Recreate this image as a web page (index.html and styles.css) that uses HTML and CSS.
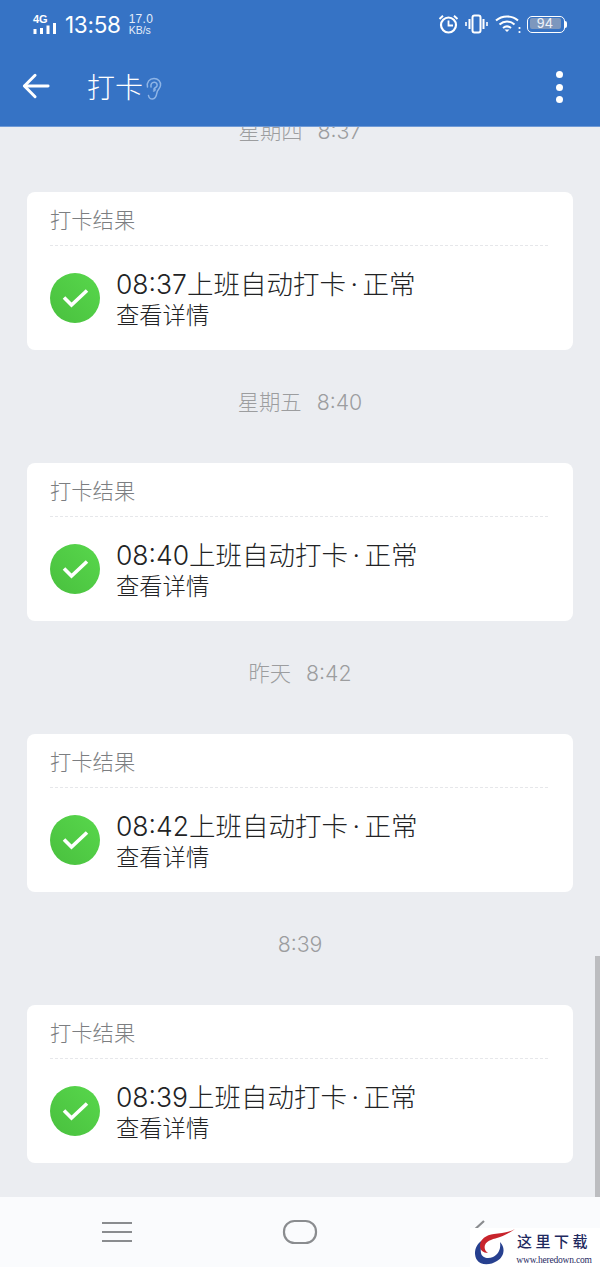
FILE: index.html
```html
<!DOCTYPE html>
<html lang="zh-CN">
<head>
<meta charset="utf-8">
<title>打卡</title>
<link rel="stylesheet" href="styles.css">
</head>
<body>
<div class="screen">
  <header class="appbar">
    <div class="status">
      <div class="status-left">
        <div class="net">
          <span class="net-label">4G</span>
          <svg class="net-bars" width="25" height="13" viewBox="0 0 25 13"><g fill="#fff"><rect x="0.5" y="7" width="3" height="5"/><rect x="7" y="6" width="3" height="6"/><rect x="13.5" y="3.500" width="3" height="8.500"/><rect x="20" y="1" width="3" height="11"/></g></svg>
        </div>
        <span class="clock">13:58</span>
        <div class="speed"><span class="speed-num">17.0</span><span class="speed-unit">KB/s</span></div>
      </div>
      <div class="status-right">
        <svg width="21" height="20" viewBox="0 0 21 20" fill="none" stroke="#fff"><circle cx="10.500" cy="11" r="7.500" stroke-width="2.200"/><path d="M10.500 6.500V11.500H15" stroke-width="1.800"/><path d="M1.500 5 5 1.800M19.500 5 16 1.800" stroke-width="2"/></svg>
        <svg width="23" height="20" viewBox="0 0 23 20" fill="none" stroke="#fff"><rect x="7.500" y="1.500" width="8" height="17" rx="2" stroke-width="2"/><path d="M4.500 5v10M18.500 5v10" stroke-width="2"/><path d="M1 8v4M22 8v4" stroke-width="1.600"/></svg>
        <svg width="26" height="20" viewBox="0 0 26 20" fill="none" stroke="#fff" stroke-width="2"><path d="M1 6.500C7 1 17 1 23 6.500"/><path d="M4.500 10.500C9 6.500 15 6.500 19.500 10.500"/><path d="M8 14C10.500 12 13.500 12 16 14"/><path d="M9.500 15.500 12 18l2.500-2.500Z" fill="#fff" stroke="none"/><circle cx="24.500" cy="14" r="1.100" fill="#fff" stroke="none"/><circle cx="24.500" cy="18" r="1.100" fill="#fff" stroke="none"/></svg>
        <div class="battery">
          <div class="battery-body"><span class="battery-fill">94</span></div>
          <span class="battery-cap"></span>
        </div>
      </div>
    </div>
    <div class="toolbar">
      <svg class="back" width="28" height="26" viewBox="0 0 30 28" fill="none" stroke="#fff" stroke-width="3.200" stroke-linecap="round" stroke-linejoin="round"><path d="M28 14H3"/><path d="M14 2.500 2.500 14 14 25.500"/></svg>
      <h1 class="title">打卡</h1>
      <svg class="ear" width="17" height="24" viewBox="0 0 17 24" fill="none" stroke="#8fb5e6" stroke-width="1.500" stroke-linecap="round"><path d="M2.500 10C1.500 5 4.500 1.500 9 1.500c4 0 7 3 6.500 7-.4 3-3 4.500-3.500 7-.5 3-1 6.500-4.500 6.500C5 22 3.800 20.500 3.500 18.500"/><path d="M6 10C5.500 7 7 5 9.500 5.200c2 .2 3 2 2.500 3.800-.4 1.500-2.500 1.500-3 3 1.500 0 1.500 2-.5 2"/></svg>
      <div class="more"><span></span><span></span><span></span></div>
    </div>
  </header>

  <main class="feed">
    <div class="feed-scroll">
      <section class="entry">
        <p class="stamp"><span>星期四</span><span>8:37</span></p>
        <article class="card">
          <h2 class="card-title">打卡结果</h2>
          <div class="card-row">
            <div class="ok"><svg width="50" height="50" viewBox="0 0 50 50"><path d="M14 24.500 21.500 32 37 17.500" fill="none" stroke="#fff" stroke-width="3.600"/></svg></div>
            <div class="card-text">
              <p class="punch">08:37上班自动打卡<span class="dot">·</span>正常</p>
              <p class="detail">查看详情</p>
            </div>
          </div>
        </article>
      </section>
      <section class="entry">
        <p class="stamp"><span>星期五</span><span>8:40</span></p>
        <article class="card">
          <h2 class="card-title">打卡结果</h2>
          <div class="card-row">
            <div class="ok"><svg width="50" height="50" viewBox="0 0 50 50"><path d="M14 24.500 21.500 32 37 17.500" fill="none" stroke="#fff" stroke-width="3.600"/></svg></div>
            <div class="card-text">
              <p class="punch">08:40上班自动打卡<span class="dot">·</span>正常</p>
              <p class="detail">查看详情</p>
            </div>
          </div>
        </article>
      </section>
      <section class="entry">
        <p class="stamp"><span>昨天</span><span>8:42</span></p>
        <article class="card">
          <h2 class="card-title">打卡结果</h2>
          <div class="card-row">
            <div class="ok"><svg width="50" height="50" viewBox="0 0 50 50"><path d="M14 24.500 21.500 32 37 17.500" fill="none" stroke="#fff" stroke-width="3.600"/></svg></div>
            <div class="card-text">
              <p class="punch">08:42上班自动打卡<span class="dot">·</span>正常</p>
              <p class="detail">查看详情</p>
            </div>
          </div>
        </article>
      </section>
      <section class="entry">
        <p class="stamp"><span>8:39</span></p>
        <article class="card">
          <h2 class="card-title">打卡结果</h2>
          <div class="card-row">
            <div class="ok"><svg width="50" height="50" viewBox="0 0 50 50"><path d="M14 24.500 21.500 32 37 17.500" fill="none" stroke="#fff" stroke-width="3.600"/></svg></div>
            <div class="card-text">
              <p class="punch">08:39上班自动打卡<span class="dot">·</span>正常</p>
              <p class="detail">查看详情</p>
            </div>
          </div>
        </article>
      </section>
    </div>
    <div class="scrollbar"></div>
  </main>

  <nav class="navbar">
    <svg width="32" height="22" viewBox="0 0 32 22" fill="none" stroke="#8a8c8f" stroke-width="2.200"><path d="M1 2H31M1 11H31M1 20H31"/></svg>
    <svg class="nav-home" width="36" height="26" viewBox="0 0 36 26" fill="none" stroke="#8a8c8f" stroke-width="2.200"><rect x="2" y="2" width="32" height="22" rx="10.500"/></svg>
    <svg class="nav-back" width="36" height="26" viewBox="0 0 36 26" fill="none" stroke="#8a8c8f" stroke-width="2.200"><path d="M24 2 12 13l12 11"/></svg>
  </nav>

  <aside class="mark">
    <svg width="42" height="38" viewBox="0 0 42 38"><path d="M9 12C1 16-1 26 3 32c4 6 14 5 20 1 7-4 9-13 3-19 1 6-1 12-7 15-5 2-11 1-12-4-1-5 1-9 2-13Z" fill="#27408f"/><path d="M41 1C34 5 27 5 20 6 12 7 6 11 6 18c0 4 3 7 8 7-3-2-4-5-3-8 2-5 9-6 15-8 6-2 11-5 15-8Z" fill="#c8242c"/></svg>
    <div class="mark-text">
      <span class="mark-name">这里下载</span>
      <span class="mark-url">www.heredown.com</span>
    </div>
  </aside>
</div>
</body>
</html>
```
FILE: styles.css
```css
* { box-sizing: border-box; }

html, body { margin: 0; padding: 0; }

body {
  font-family: "Inter", "Noto Sans CJK SC", sans-serif;
  background: #ebedf1;
}

h1, h2, p { margin: 0; font-weight: 400; }

.screen {
  position: relative;
  width: 600px;
  height: 1267px;
  display: flex;
  flex-direction: column;
  overflow: hidden;
}

/* Blue app bar with the phone status row inside */
.appbar {
  position: relative;
  z-index: 2;
  flex: 0 0 127px;
  background: #3673c5;
  border-bottom: 1px solid #6f9ad6;
  color: #fff;
  display: flex;
  flex-direction: column;
}

.status {
  height: 46px;
  padding: 13px 33px 0 33px;
  display: flex;
  justify-content: space-between;
  align-items: flex-start;
}

.status-left { display: flex; align-items: center; }

.net { position: relative; width: 25px; height: 20px; }

.net-label {
  position: absolute;
  top: -1px;
  left: 0;
  font: 700 11px/11px "Liberation Sans", sans-serif;
}

.net-bars { position: absolute; left: 0; bottom: 0; }

.clock {
  margin-left: 7px;
  font: 400 22.500px/24px "Inter", sans-serif;
  letter-spacing: -0.300px;
}

.speed {
  margin-left: 8px;
  display: flex;
  flex-direction: column;
  font-family: "Liberation Sans", sans-serif;
  color: #e4edf9;
}

.speed-num { font-size: 12px; line-height: 11px; letter-spacing: 0.300px; }
.speed-unit { font-size: 10.500px; line-height: 11px; }

.status-right {
  padding-top: 1px;
  display: flex;
  align-items: center;
  gap: 6.500px;
}

.battery { display: flex; align-items: center; }

.battery-body {
  width: 38px;
  height: 17px;
  padding: 1.500px;
  border: 1.500px solid #fff;
  border-radius: 5px;
}

.battery-fill {
  display: block;
  width: 31px;
  height: 11px;
  border-radius: 2px;
  background: #7d97bd;
  font: 400 14px/11px "Liberation Sans", sans-serif;
  letter-spacing: 0.500px;
  text-align: center;
  color: #eef2f8;
}

.battery-cap {
  width: 2px;
  height: 7px;
  background: #fff;
  border-radius: 0 2px 2px 0;
}

.toolbar {
  position: relative;
  flex: 1;
  display: flex;
  align-items: center;
  padding: 0 0 1px 22px;
}

.back { flex: none; }

.title {
  margin-left: 37px;
  font-size: 28px;
  line-height: 36px;
  font-family: "Noto Sans CJK SC", sans-serif;
  font-weight: 300;
}

.ear { margin: 6px 0 0 2px; }

.more {
  position: absolute;
  right: 37px;
  top: 25px;
  display: flex;
  flex-direction: column;
  gap: 5.500px;
}

.more span {
  display: block;
  width: 7px;
  height: 7px;
  border-radius: 50%;
  background: #fff;
}

/* Scrolled message list, the first stamp runs under the app bar */
.feed {
  position: relative;
  flex: 1;
  min-height: 0;
  overflow: hidden;
}

.feed-scroll {
  margin-top: -14px;
  padding: 0 27px;
  display: flex;
  flex-direction: column;
  gap: 34px;
}

.entry { display: flex; flex-direction: column; gap: 43px; }

.stamp {
  height: 36px;
  padding-top: 1px;
  display: flex;
  justify-content: center;
  align-items: center;
  gap: 15px;
  color: #9c9d9f;
  font-family: "Inter", "Noto Sans CJK SC", sans-serif;
  font-size: 21.300px;
  font-weight: 300;
  line-height: 35px;
}

.card {
  height: 158px;
  padding: 0 25px 0 23px;
  background: #fff;
  border-radius: 8px;
  display: flex;
  flex-direction: column;
}

.card-title {
  height: 54px;
  border-bottom: 1px dashed #e6e7ea;
  color: #7c7e81;
  font-family: "Noto Sans CJK SC", sans-serif;
  font-size: 21.300px;
  font-weight: 300;
  line-height: 54px;
}

.card-row {
  display: flex;
  align-items: center;
  gap: 16px;
  padding-top: 22px;
}

.ok {
  flex: none;
  width: 50px;
  height: 50px;
  border-radius: 50%;
  background: linear-gradient(45deg, #49c03e, #58d74c);
}

.ok svg { display: block; }

.card-text { color: #222325; margin-top: -1px; }

.punch {
  font-family: "Inter", "Noto Sans CJK SC", sans-serif;
  font-size: 26.500px;
  font-weight: 300;
  line-height: 34px;
  white-space: nowrap;
}

.dot { margin: 0 4.500px; }

.detail {
  margin-top: -1px;
  font-family: "Noto Sans CJK SC", sans-serif;
  font-size: 23.300px;
  font-weight: 300;
  line-height: 28px;
}

.scrollbar {
  position: absolute;
  right: 0;
  bottom: 0;
  width: 5px;
  height: 241px;
  background: #bcbdc0;
}

.navbar {
  flex: 0 0 70px;
  background: #fafbfd;
  padding: 0 0 0 101px;
  display: flex;
  align-items: center;
}

.navbar svg { margin-bottom: 1px; }
.nav-home { margin-left: 149px; }
.nav-back { margin-left: 142px; }

/* Site badge printed over the corner */
.mark {
  position: absolute;
  right: 0;
  bottom: 0;
  width: 130px;
  height: 39px;
  padding-left: 4px;
  background: #fff;
  display: flex;
  align-items: flex-end;
}

.mark svg { flex: none; margin-bottom: 1px; }

.mark-text {
  display: flex;
  flex-direction: column;
  align-items: center;
  width: 74px;
  padding-left: 2px;
  color: #1f2a5f;
}

.mark-name {
  font-family: "Noto Sans CJK SC", sans-serif;
  font-size: 15px;
  font-weight: 500;
  line-height: 20px;
  letter-spacing: 3.500px;
  white-space: nowrap;
  margin-bottom: 3px;
}

.mark-url {
  font-family: "Liberation Serif", serif;
  font-size: 9.500px;
  letter-spacing: -0.200px;
  line-height: 13px;
  white-space: nowrap;
}
```
